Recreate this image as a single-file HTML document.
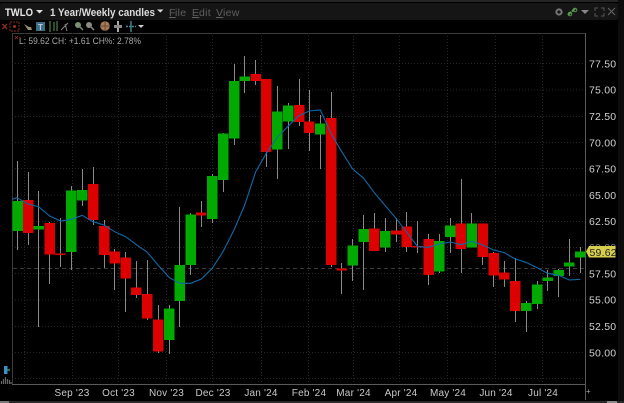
<!DOCTYPE html>
<html>
<head>
<meta charset="utf-8">
<style>
html,body{margin:0;padding:0;background:#000;}
#p{position:relative;width:624px;height:403px;overflow:hidden;background:#000;font-family:"Liberation Sans",sans-serif;}
svg{position:absolute;left:0;top:0;filter:blur(0.35px);}
text{font-family:"Liberation Sans",sans-serif;}
</style>
</head>
<body>
<div id="p">
<svg width="624" height="403" viewBox="0 0 624 403" xmlns="http://www.w3.org/2000/svg">
<!-- top chrome -->
<rect x="0" y="0" width="624" height="2" fill="#242424"/>
<rect x="0" y="3" width="618" height="17" rx="2" fill="#151515"/>
<rect x="618" y="0" width="6" height="403" fill="#0c0c0c"/>
<text x="5" y="16" font-size="11" font-weight="bold" fill="#e8e8e8" textLength="28" lengthAdjust="spacingAndGlyphs">TWLO</text>
<path d="M36 10h7l-3.5 3.5z" fill="#ddd"/>
<text x="50" y="16" font-size="10.700" font-weight="bold" fill="#dcdcdc" textLength="105" lengthAdjust="spacingAndGlyphs">1 Year/Weekly candles</text>
<path d="M157 9.500h6.500l-3.200 3z" fill="#ddd"/>
<text x="169" y="16" font-size="10.500" fill="#5f5f5f" letter-spacing=".3" text-decoration="underline">F</text>
<text x="175" y="16" font-size="10.500" fill="#5f5f5f" letter-spacing=".3">ile</text>
<text x="192" y="16" font-size="10.500" fill="#5f5f5f" letter-spacing=".3" text-decoration="underline">E</text>
<text x="199" y="16" font-size="10.500" fill="#5f5f5f" letter-spacing=".3">dit</text>
<text x="216" y="16" font-size="10.500" fill="#5f5f5f" letter-spacing=".3" text-decoration="underline">V</text>
<text x="223" y="16" font-size="10.500" fill="#5f5f5f" letter-spacing=".3">iew</text>
<!-- top right icons -->
<circle cx="559" cy="12" r="2.600" fill="none" stroke="#777" stroke-width="2"/>
<path d="M568 15l3-3M572 11.500l3-3" stroke="#5a9a50" stroke-width="2" fill="none"/>
<circle cx="570" cy="14" r="1.800" fill="none" stroke="#5a9a50"/>
<circle cx="575" cy="10" r="1.800" fill="none" stroke="#5a9a50"/>
<path d="M581 10h8l-4 4z" fill="#888"/>
<path d="M595 11V8h3M601 8h3v3M604 13v3h-3M598 16h-3v-3" stroke="#555" fill="none"/>
<path d="M608 8l7 7M615 8l-7 7" stroke="#666" fill="none"/>
<!-- toolbar icons -->
<path d="M2.500 24l4.500 5M7 24l-4.500 5" stroke="#8a2a20" stroke-width="1.400"/>
<rect x="10" y="22" width="9" height="9" fill="none" stroke="#8a2a20" stroke-dasharray="2 1"/>
<circle cx="14.500" cy="26.500" r="1.500" fill="#a03020"/>
<path d="M24 24l5 3 2 0 1 3-4 0-2-3z" fill="#a08a70"/>
<rect x="36" y="22" width="9" height="9" fill="#3d6d85"/>
<text x="38" y="30" font-size="8" font-weight="bold" fill="#bcd">T</text>
<path d="M50 21v11M54 22v9M57 21v10" stroke="#3f7040" stroke-width="1.400" fill="none"/>
<path d="M61 30l5-5 2-2M65 24l2 7" stroke="#888" fill="none"/>
<circle cx="78" cy="25" r="3" fill="#7a9070"/>
<path d="M80 27l3 3" stroke="#7a8a70" stroke-width="1.400"/>
<circle cx="89" cy="25" r="3" fill="#8a8a80"/>
<path d="M91 27l3 3" stroke="#888" stroke-width="1.400"/>
<circle cx="105" cy="26" r="4.800" fill="#a87a58"/>
<path d="M100 26h10M105 21v10" stroke="#5a3a28" stroke-width=".7"/>
<path d="M118 21v11" stroke="#aaa" stroke-width="2"/>
<path d="M114 26.500h8" stroke="#888" stroke-width="3"/>
<path d="M131 21v11" stroke="#4a8a98" stroke-width="1.400"/>
<path d="M126 26.500h10" stroke="#4a8a98" stroke-width="1.400" stroke-dasharray="2 1"/>
<path d="M138 25h6l-3 3z" fill="#ccc"/>
<!-- plot frame -->
<path d="M12 33.500H586" stroke="#3c3c3c"/>
<path d="M12.500 33V384.500" stroke="#3c3c3c"/>
<path d="M12 384.500H586" stroke="#5a5a5a"/>
<path d="M585.500 33V400" stroke="#5a5a5a"/>
<!-- grid -->
<g stroke="#262626" stroke-dasharray="1 2" fill="none">
<path d="M12 63.500H585M12 90H585M12 116.500H585M12 142.500H585M12 168.500H585M12 195H585M12 221.500H585M12 247.500H585M12 273.500H585M12 300H585M12 326.500H585M12 352.500H585M12 378.500H585"/>
<path d="M24.500 33V384M72.500 33V384M118.500 33V384M166.500 33V384M212.500 33V384M261.500 33V384M308.500 33V384M353.500 33V384M399.500 33V384M447.500 33V384M495.500 33V384M542.500 33V384"/>
</g>
<path d="M13 268.500H585" stroke="#3a3a3a" stroke-dasharray="4 3"/>
<!-- wicks -->
<path stroke="#8a8a8a" stroke-width="1" fill="none" d="M17.500 161V250M28.500 172V245M38.500 191V327M49.500 222V284M60.500 218V267M71.500 186V270M82.500 169V206M93.500 167V225M104.500 220V268M114.500 249V290M125.500 252V312M136.500 261V298M147.500 260V320M158.500 305V353M169.500 305V354M179.500 207V327M190.500 213V275M201.500 201V227M212.500 174V223M223.500 133V192M234.500 64V145M244.500 56V93M255.500 60V85M266.500 79V167M277.500 86V179M288.500 103V149M299.500 79V126M309.500 90V151M320.500 115V169M331.500 92V267M341.500 263V294M352.500 239V281M363.500 215V290M374.500 213V251M385.500 218V252M396.500 218V242M406.500 212V252M417.500 221V253M428.500 234V285M439.500 234V273M450.500 218V253M461.500 179V273M471.500 213V247M482.500 224V265M493.500 252V287M504.500 261V287M515.500 258V322M526.500 301V332M537.500 281V309M547.500 270V291M558.500 269V297M569.500 239V276M580.500 247V273"/>
<!-- green bodies -->
<g fill="#00aa00">
<rect x="12.500" y="201" width="10.500" height="30"/>
<rect x="33.500" y="226" width="10.500" height="3.500"/>
<rect x="66" y="190.500" width="10.500" height="61.500"/>
<rect x="77" y="190" width="10.500" height="10.500"/>
<rect x="164" y="308.500" width="10.500" height="31.500"/>
<rect x="174.500" y="265" width="10.500" height="36"/>
<rect x="185.500" y="214.500" width="10.500" height="50.500"/>
<rect x="207" y="176" width="10.500" height="43"/>
<rect x="218" y="133.500" width="10.500" height="46.500"/>
<rect x="229" y="81" width="10.500" height="57.500"/>
<rect x="239.500" y="76.500" width="10.500" height="4.500"/>
<rect x="272" y="111.500" width="10.500" height="38"/>
<rect x="283" y="105.500" width="10.500" height="16"/>
<rect x="315" y="123.500" width="10.500" height="11"/>
<rect x="347.500" y="245.500" width="10.500" height="20"/>
<rect x="358.500" y="229" width="10.500" height="13"/>
<rect x="380" y="231" width="10.500" height="16.500"/>
<rect x="434" y="241" width="10.500" height="30.500"/>
<rect x="445" y="225.500" width="10.500" height="11.500"/>
<rect x="466.500" y="223.500" width="10.500" height="24"/>
<rect x="521" y="303" width="10.500" height="8"/>
<rect x="532" y="284.500" width="10.500" height="19.500"/>
<rect x="542.500" y="277.500" width="10.500" height="3.500"/>
<rect x="553.500" y="270" width="10.500" height="6"/>
<rect x="564" y="262.500" width="10.500" height="4"/>
<rect x="575" y="251.500" width="10.500" height="6"/>
</g>
<!-- red bodies -->
<g fill="#dc0000">
<rect x="23" y="200" width="10.500" height="33"/>
<rect x="44.500" y="223" width="10.500" height="31.500"/>
<rect x="55" y="253.500" width="10.500" height="1.500"/>
<rect x="88" y="184" width="10.500" height="36"/>
<rect x="99" y="226" width="10.500" height="29"/>
<rect x="109.500" y="251.500" width="10.500" height="12"/>
<rect x="120.500" y="257.500" width="10.500" height="21"/>
<rect x="131" y="287.500" width="10.500" height="7.500"/>
<rect x="142" y="294" width="10.500" height="24.500"/>
<rect x="153" y="319.500" width="10.500" height="32"/>
<rect x="196" y="212.500" width="10.500" height="3"/>
<rect x="250.500" y="74" width="10.500" height="7"/>
<rect x="261" y="79" width="10.500" height="73"/>
<rect x="294" y="105" width="10.500" height="17"/>
<rect x="304" y="121.500" width="10.500" height="11.500"/>
<rect x="326" y="118" width="10.500" height="147"/>
<rect x="336.500" y="268.500" width="10.500" height="2"/>
<rect x="369" y="228.500" width="10.500" height="22.500"/>
<rect x="391" y="230.500" width="10.500" height="4"/>
<rect x="401.500" y="226.500" width="10.500" height="20.500"/>
<rect x="412.500" y="246" width="10.500" height="1.500"/>
<rect x="423.500" y="239" width="10.500" height="36"/>
<rect x="455.500" y="223.500" width="10.500" height="25.500"/>
<rect x="477.500" y="223.500" width="10.500" height="33.500"/>
<rect x="488.500" y="253" width="10.500" height="22.500"/>
<rect x="499" y="272.500" width="10.500" height="7"/>
<rect x="510" y="281" width="10.500" height="30"/>
</g>
<!-- moving average -->
<polyline fill="none" stroke="#0f6aa8" stroke-width="1.100" points="12.300,199.300 16.700,197.700 28,204 38.700,206.700 49.700,216 60.700,221 71.300,219.300 82.300,215.300 93,221.700 104,225 114.700,231.700 125.700,236.700 136.300,244.700 147,252 158,265 169,277.300 179.700,283.300 190.700,283.300 201.300,279 212,268.700 223,251.700 234,230 244.700,205 255.700,171.700 266.300,153.300 277.300,137.300 288.300,126 299,115.700 309.300,111 320.300,110 331,133.300 341.700,151.700 352.700,169 363.700,178.300 374.300,192.700 385.300,205.700 396,218.300 406.300,231.700 417.700,246.700 428.700,247.300 439.300,244 450.300,242 461,244.700 471.700,241.300 482.700,245 493.700,250 504.300,252.700 515.300,259 526,262.300 537,267.700 547.700,273.300 558.700,275.300 569.300,280 580.300,279.300"/>
<!-- price axis labels -->
<g font-size="10.500" fill="#cfcfcf" letter-spacing=".2">
<text x="589" y="67.500">77.50</text>
<text x="589" y="93.500">75.00</text>
<text x="589" y="120">72.50</text>
<text x="589" y="146.500">70.00</text>
<text x="589" y="172.500">67.50</text>
<text x="589" y="199">65.00</text>
<text x="589" y="225">62.50</text>
<text x="589" y="251" fill="#777">60.00</text>
<text x="589" y="277.500">57.50</text>
<text x="589" y="303.500">55.00</text>
<text x="589" y="330">52.50</text>
<text x="589" y="356.500">50.00</text>
</g>
<!-- last price tag -->
<path d="M586 251.500l3-5.500h26.500v11.500H589z" fill="#d6ce4c"/>
<text x="589.500" y="256" font-size="10.500" fill="#222" letter-spacing=".2">59.62</text>
<!-- time axis labels -->
<g font-size="10" fill="#c8c8c8" letter-spacing=".2" text-anchor="middle">
<text x="72" y="396">Sep '23</text>
<text x="118.500" y="396">Oct '23</text>
<text x="166.500" y="396">Nov '23</text>
<text x="213" y="396">Dec '23</text>
<text x="261" y="396">Jan '24</text>
<text x="309" y="396">Feb '24</text>
<text x="353.500" y="396">Mar '24</text>
<text x="401" y="396">Apr '24</text>
<text x="448" y="396">May '24</text>
<text x="496" y="396">Jun '24</text>
<text x="543" y="396">Jul '24</text>
</g>
<text x="586" y="394" font-size="8" fill="#aaa">+</text>
<!-- status line -->
<path d="M15 36l3 3M18 36l-3 3" stroke="#a03030" stroke-width=".8"/>
<text x="19" y="44" font-size="9.200" fill="#a8a8a8" textLength="122" lengthAdjust="spacingAndGlyphs">L: 59.62 CH: +1.61 CH%: 2.78%</text>
<!-- left side mini icons -->
<rect x="4" y="366" width="3.500" height="8" fill="#3a90c8"/>
<path d="M7 370h3" stroke="#2aa060" stroke-width="1.500"/>
<path d="M1.500 384v-3M3.500 384v-5M5.500 384v-7M7.500 384v-5M9.500 384v-4M11 384v-2" stroke="#666" stroke-width="1.200"/>
<!-- bottom scroll bar -->
<rect x="0" y="401" width="624" height="2" fill="#2a2a2a"/>
<rect x="0" y="401" width="9" height="2" fill="#777"/>
<rect x="607" y="401" width="10" height="2" fill="#888"/>
</svg>
</div>
</body>
</html>
